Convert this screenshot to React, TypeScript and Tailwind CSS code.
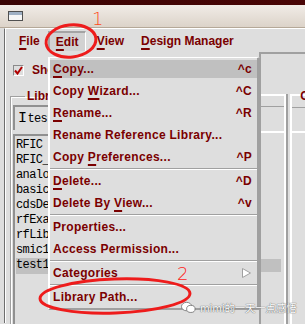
import React from "react";

type Row = { label: React.ReactNode; key?: string; sub?: boolean; sel?: boolean } | "sep";

const U = ({ c }: { c: string }) => (
  <span className="underline decoration-2 underline-offset-[3px]">{c}</span>
);

const rows: Row[] = [
  { label: <><U c="C" />opy...</>, key: "^c", sel: true },
  { label: <>Copy <U c="W" />izard...</>, key: "^C" },
  { label: <><U c="R" />ename...</>, key: "^R" },
  { label: <>Rename Reference Library...</> },
  { label: <>Copy <U c="P" />references...</>, key: "^P" },
  "sep",
  { label: <><U c="D" />elete...</>, key: "^D" },
  { label: <>Delete By <U c="V" />iew...</>, key: "^v" },
  "sep",
  { label: <>Properties...</> },
  { label: <>Access Permission...</> },
  "sep",
  { label: <>Categories</>, sub: true },
  "sep",
  { label: <>Library Path...</> },
];

const libs = ["RFIC", "RFIC_", "analo", "basic", "cdsDe", "rfExa", "rfLib", "smic1", "test1"];

export default function App() {
  return (
    <div className="relative w-[305px] h-[324px] overflow-hidden bg-[#dedede] font-['Liberation_Sans',Arial,sans-serif] text-[#7a0000]">
      {/* top dark band */}
      <div className="h-[5px] bg-gradient-to-r from-[#3a0404] to-[#4a0606]" />
      {/* title bar */}
      <div className="h-[23px] bg-gradient-to-b from-[#f1ece7] to-[#dcd3c9] border-b border-[#b5a898] flex items-center pl-[8px]">
        <div className="w-[15px] h-[10px] border border-[#505050] bg-[#f6f6f6] flex flex-col">
          <div className="h-[3px] bg-[#9fb0c4]" />
        </div>
      </div>
      {/* window body */}
      <div className="flex flex-col h-[295px] ml-[4px] border-l border-[#6e6e6e] shadow-[inset_1px_0_0_#ffffff] border-t border-t-white">
        {/* menubar */}
        <div className="flex h-[26px] mt-[2px] items-stretch text-[12px] font-bold">
          <div className="ml-[14px] flex items-center"><U c="F" />ile</div>
          <div className="ml-[8px] w-[38px] flex items-center justify-center bg-[#d2d2d2] border-t-2 border-l-2 border-[#a4a4a4] border-r border-r-white">
            <span><U c="E" />dit</span>
          </div>
          <div className="ml-[11px] flex items-center"><U c="V" />iew</div>
          <div className="ml-[17px] flex items-center"><U c="D" />esign Manager</div>
        </div>
        {/* content */}
        <div className="flex flex-1">
          {/* left column */}
          <div className="w-[254px] flex flex-col">
            <div className="flex items-center mt-[13px] ml-[8px] h-[12px]">
              <div className="w-[11px] h-[11px] border-t border-l border-[#8a8a8a] border-r border-b border-r-white border-b-white bg-[#dedede] flex items-center justify-center">
                <svg width="9" height="9" viewBox="0 0 9 9">
                  <path d="M1 4.5 L3.5 7.5 L8 1" stroke="#b00000" strokeWidth="2" fill="none" />
                </svg>
              </div>
              <span className="ml-[8px] text-[12px] font-bold">Show</span>
            </div>
            <fieldset className="mt-[14px] ml-[5px] border-t border-l border-[#a0a0a0] shadow-[inset_1px_1px_0_#ffffff] pl-[2px] pt-[1px]">
              <legend className="ml-[12px] px-[2px] text-[12px] font-bold leading-[12px]">Library</legend>
              <div className="h-[25px] mt-[2px] w-[200px] border-t-2 border-l-2 border-[#909090] bg-[#dedede] flex items-center pl-[3px] font-['Liberation_Mono',monospace] text-[12px] tracking-[-0.6px] text-black">
                <span className="text-[15px] font-light mr-[1px] leading-none">I</span>test
              </div>
              <div className="mt-[4px] w-[200px] h-[190px] border-t-2 border-l-2 border-[#909090] pt-[2px] pl-[1px] font-['Liberation_Mono',monospace] text-[12px] tracking-[-0.6px] text-black leading-[15px]">
                {libs.map((l) => (
                  <div key={l} className="h-[15px]">
                    <span className={l === "test1" ? "bg-[#c0c0c0] pr-[1px] inline-block h-[16px]" : ""}>{l}</span>
                  </div>
                ))}
              </div>
            </fieldset>
          </div>
          {/* right column */}
          <div className="flex-1 flex flex-col mt-[1px] border-t-2 border-l-2 border-[#a0a0a0]">
            <div className="h-[40px]" />
            <div className="flex flex-1">
              <div className="w-[23px] flex flex-col">
                <div className="h-[13px] border-t-2 border-white shadow-[inset_0_-1px_0_#a0a0a0]" />
                <div className="h-[26px] border-b-2 border-white" />
                <div className="flex-1 flex flex-col">
                  <div className="h-[126px]" />
                  <div className="h-[13px] bg-[#c0c0c0] w-[20px]" />
                </div>
              </div>
              <div className="w-[2px] bg-white" />
              <div className="w-[2px] bg-[#a0a0a0]" />
              <div className="w-[2px] bg-white ml-[2px]" />
              <div className="flex-1 flex flex-col">
                <div className="h-[13px] border-t-2 border-white flex justify-end">
                  <span className="text-[12px] font-bold leading-[8px] -mt-[4px] mr-[-4px]">C</span>
                </div>
                <div className="h-[26px] border-b-2 border-white border-t border-t-[#a0a0a0]" />
              </div>
            </div>
          </div>
        </div>
      </div>

      {/* dropdown menu (overlay) */}
      <div className="absolute left-[48px] top-[57px] w-[212px] bg-[#dedede] border-t border-l-2 border-white border-r-[3px] border-b-2 border-r-[#a0a0a0] border-b-[#a0a0a0] text-[12px] font-bold tracking-[0.3px] flex flex-col">
        {rows.map((r, i) =>
          r === "sep" ? (
            <div key={i} className="h-[2px] border-t border-[#a0a0a0] bg-white" />
          ) : (
            <div key={i} className="h-[22px] flex items-center">
              <div className={"flex-1 h-[18px] flex items-center pl-[3px] pr-[5px] " + (r.sel ? "bg-[#c0c0c0]" : "")}>
                <span className="flex-1">{r.label}</span>
                {r.key && <span>{r.key}</span>}
                {r.sub && (
                  <svg width="9" height="10" viewBox="0 0 9 10" className="mr-[1px]">
                    <path d="M0.5 0.5 L8.5 5 L0.5 9.5 Z" fill="#ffffff" stroke="#a0a0a0" />
                  </svg>
                )}
              </div>
            </div>
          )
        )}
      </div>

      {/* annotations */}
      <svg className="absolute left-0 top-0 pointer-events-none" width="305" height="324">
        <ellipse cx="71" cy="41" rx="25" ry="16" transform="rotate(-6 71 41)" fill="none" stroke="#ee1c1c" strokeWidth="3" />
        <ellipse cx="115" cy="296" rx="75" ry="17" transform="rotate(-2 115 296)" fill="none" stroke="#ee1c1c" strokeWidth="3" />
      </svg>
      <div className="absolute left-[92px] top-[10px] text-[18px] leading-none text-[#ff4a1a] font-['DejaVu_Sans',sans-serif] font-light">1</div>
      <div className="absolute left-[177px] top-[265px] text-[18px] leading-none text-[#ff2020] font-['DejaVu_Sans',sans-serif] font-light">2</div>

      {/* watermark */}
      <div className="absolute left-[181px] top-[300px] flex items-center gap-[4px] text-[10.5px] tracking-[-0.2px] text-white [text-shadow:0_0_1px_#666,0_0_1px_#666] font-['Noto_Sans_CJK_SC',sans-serif]">
        <svg width="15" height="13" viewBox="0 0 16 13">
          <ellipse cx="6" cy="5.5" rx="5.5" ry="4.5" fill="#ffffff" stroke="#666" strokeWidth="0.8" />
          <ellipse cx="10.5" cy="8" rx="4.5" ry="3.8" fill="#ffffff" stroke="#666" strokeWidth="0.8" />
        </svg>
        <span>mimi的一天一点感悟</span>
      </div>
    </div>
  );
}
